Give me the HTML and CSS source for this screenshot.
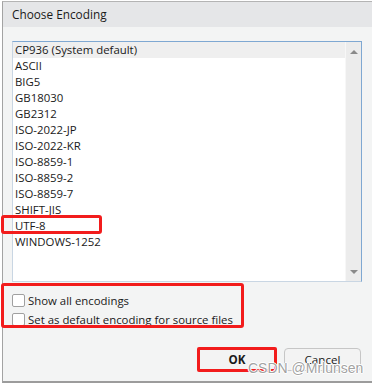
FILE: index.html
```html
<!DOCTYPE html>
<html lang="en">

<head>
    <meta charset="UTF-8">
    <title>Choose Encoding</title>
    <link rel="stylesheet" href="styles.css">
</head>

<body>
    <div class="dialog">
        <div class="title">Choose Encoding</div>
        <div class="content">
            <div class="list">
                <ul class="items">
                    <li class="selected">CP936 (System default)</li>
                    <li>ASCII</li>
                    <li>BIG5</li>
                    <li>GB18030</li>
                    <li>GB2312</li>
                    <li>ISO-2022-JP</li>
                    <li>ISO-2022-KR</li>
                    <li>ISO-8859-1</li>
                    <li>ISO-8859-2</li>
                    <li>ISO-8859-7</li>
                    <li>SHIFT-JIS</li>
                    <li>UTF-8</li>
                    <li>WINDOWS-1252</li>
                </ul>
                <div class="scrollbar">
                    <span class="arrow up"></span>
                    <span class="arrow down"></span>
                </div>
            </div>
            <div class="options">
                <label class="check"><span class="box"></span>Show all encodings</label>
                <label class="check"><span class="box"></span>Set as default encoding for source files</label>
            </div>
            <div class="buttons">
                <button class="btn ok">OK</button>
                <button class="btn">Cancel</button>
            </div>
        </div>
    </div>

    <!-- red annotation boxes -->
    <div class="mark mark-utf"></div>
    <div class="mark mark-options"></div>
    <div class="watermark">CSDN @Mrlunsen</div>
</body>

</html>
```

FILE: styles.css
```css
* {
    box-sizing: border-box;
}

body {
    margin: 0;
    width: 372px;
    height: 383px;
    overflow: hidden;
    background: #fff;
    font-family: "Open Sans", "Noto Sans", sans-serif;
    color: #1a1a1a;
}

.dialog {
    margin: 1px 0 0 2px;
    width: 380px;
    height: 382px;
    background: #f3f4f4;
    border-left: 1px solid #a3a3a3;
    border-top: 1px solid #b4b4b4;
    border-bottom: 2px solid #9c9c9c;
}

.title {
    height: 25px;
    line-height: 25px;
    padding-left: 9px;
    font-size: 11.8px;
    background: #e5e6e8;
}

.content {
    padding: 14px 0 0 9px;
}

.list {
    display: flex;
    width: 350px;
    height: 241px;
    background: #fff;
    border: 1px solid #c9d6e3;
    border-top-color: #7fa8d2;
    border-right-color: #7fa8d2;
}

.items {
    flex: 1;
    margin: 0;
    padding: 0;
    list-style: none;
    font-size: 11.4px;
}

.items li {
    height: 16px;
    line-height: 16px;
    padding-left: 2px;
}

.items li.selected {
    background: #efefef;
}

.scrollbar {
    position: relative;
    width: 16px;
    background: #ececec;
    border-left: 1px solid #f7f7f7;
}

.arrow {
    position: absolute;
    left: 4px;
    width: 0;
    height: 0;
    border-left: 4px solid transparent;
    border-right: 4px solid transparent;
}

.arrow.up {
    top: 8px;
    border-bottom: 4px solid #8a8a8a;
}

.arrow.down {
    bottom: 7px;
    border-top: 4px solid #8a8a8a;
}

.options {
    display: flex;
    flex-direction: column;
    gap: 6px;
    margin-top: 12px;
    font-size: 11.4px;
}

.check {
    display: flex;
    align-items: center;
    gap: 3px;
    height: 13px;
}

.check .box {
    width: 13px;
    height: 13px;
    background: #fff;
    border: 1px solid #a0a0a0;
    border-radius: 2px;
}

.buttons {
    display: flex;
    align-items: center;
    gap: 7px;
    margin: 21px 0 0 185px;
}

.btn {
    height: 23px;
    padding: 0;
    font-family: inherit;
    font-size: 11.6px;
    color: #1a1a1a;
    background: #f3f3f3;
    border: 1px solid #c6c6c6;
    border-radius: 4px;
}

.btn:first-child {
    width: 80px;
    height: 25px;
}

.btn + .btn {
    width: 77px;
}

.btn.ok {
    font-weight: bold;
    border: 3px solid #f21c1c;
    border-radius: 2px;
}

.mark {
    position: absolute;
    border: 3px solid #f21c1c;
    border-radius: 3px;
}

.mark-utf {
    left: 1px;
    top: 215px;
    width: 101px;
    height: 19px;
}

.mark-options {
    left: 1px;
    top: 283px;
    width: 243px;
    height: 45px;
}

.watermark {
    position: absolute;
    left: 248px;
    top: 360px;
    font-family: "Liberation Sans", Arial, sans-serif;
    font-size: 14px;
    color: rgba(150, 150, 150, 0.9);
    text-shadow: -1px 0 #fff, 1px 0 #fff, 0 -1px #fff, 0 1px #fff;
}
```
